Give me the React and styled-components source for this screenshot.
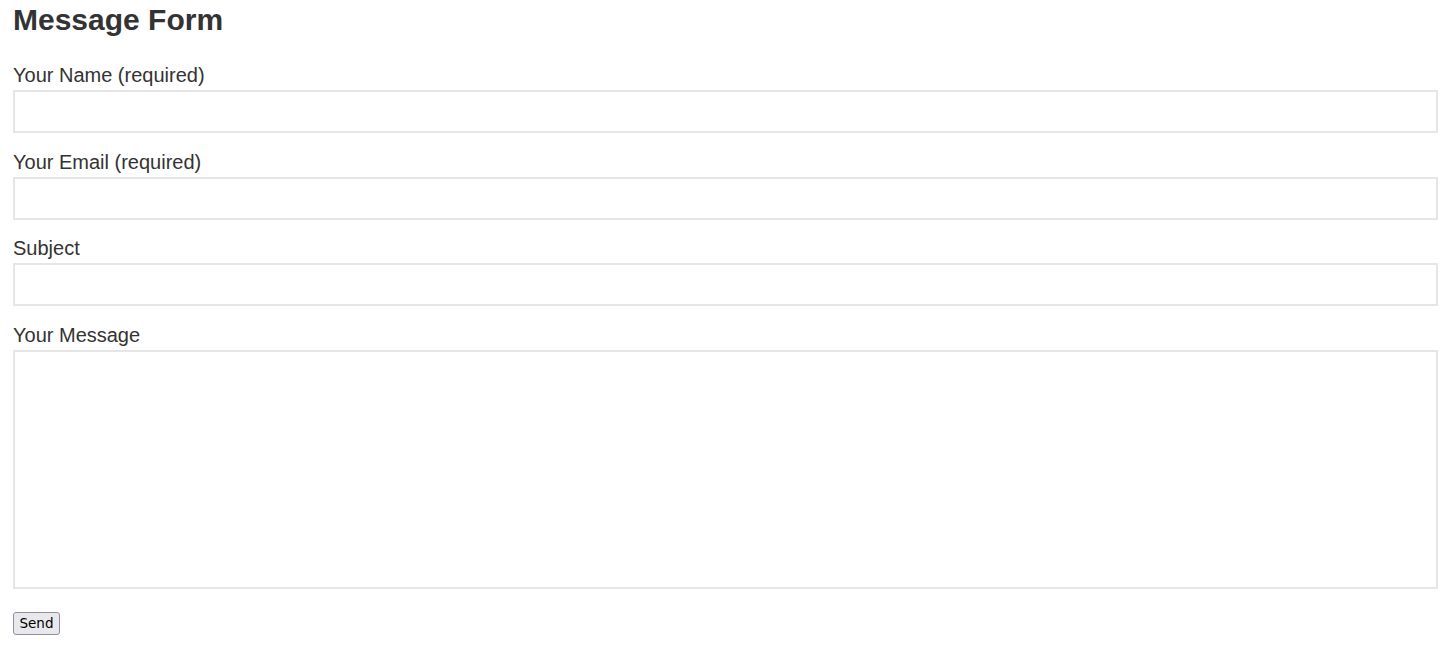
import React from "react";
import styled, { createGlobalStyle } from "styled-components";

const Global = createGlobalStyle`
  html, body { margin: 0; padding: 0; background: #fff; }
  body { font-family: "Liberation Sans", Arial, sans-serif; color: #333; }
`;

const Page = styled.div`
  padding: 2px 15px 0 13px;
`;

const Title = styled.h2`
  margin: 0 0 26px;
  font-size: 30px;
  line-height: 36px;
  font-weight: bold;
  color: #333;
`;

const Form = styled.form`
  display: flex;
  flex-direction: column;
  align-items: stretch;
`;

const Field = styled.div`
  display: flex;
  flex-direction: column;
  gap: 3px;
  margin-bottom: 17.67px;
`;

const Label = styled.label`
  font-size: 20px;
  line-height: 23px;
  color: #333;
`;

const Input = styled.input`
  box-sizing: border-box;
  width: 100%;
  height: 43px;
  border: 2px solid #e6e6e6;
  background: #fff;
  margin: 0;
  padding: 6px 10px;
  font-family: inherit;
  font-size: 16px;
  outline: none;
`;

const TextArea = styled.textarea`
  box-sizing: border-box;
  width: 100%;
  height: 239px;
  border: 2px solid #e6e6e6;
  background: #fff;
  margin: 0;
  padding: 6px 10px;
  font-family: inherit;
  font-size: 16px;
  resize: none;
  outline: none;
`;

const Actions = styled.div`
  margin-top: 5px;
  display: flex;
`;

const Button = styled.button`
  box-sizing: border-box;
  height: 23px;
  width: 47px;
  padding: 0;
  font-family: "DejaVu Sans", Tahoma, sans-serif;
  font-size: 13.5px;
  color: #000;
  background: #e9e9ed;
  border: 1px solid #8f8f9d;
  border-radius: 3px;
`;

export default function App() {
  return (
    <>
      <Global />
      <Page>
        <Title>Message Form</Title>
        <Form onSubmit={(e) => e.preventDefault()}>
          <Field>
            <Label>Your Name (required)</Label>
            <Input type="text" />
          </Field>
          <Field>
            <Label>Your Email (required)</Label>
            <Input type="email" />
          </Field>
          <Field>
            <Label>Subject</Label>
            <Input type="text" />
          </Field>
          <Field>
            <Label>Your Message</Label>
            <TextArea />
          </Field>
          <Actions>
            <Button type="submit">Send</Button>
          </Actions>
        </Form>
      </Page>
    </>
  );
}
